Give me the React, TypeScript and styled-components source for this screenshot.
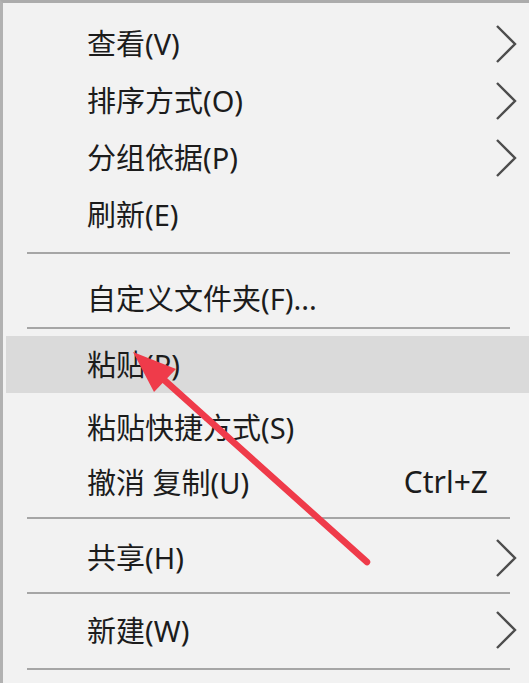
import React from 'react'
import styled, { createGlobalStyle } from 'styled-components'

const GlobalStyle = createGlobalStyle`
  html, body {
    margin: 0;
    padding: 0;
    background: #f2f2f2;
  }
  body {
    font-family: 'Noto Sans', 'Noto Sans CJK SC', sans-serif;
  }
`

type Entry =
  | { kind: 'item'; label: string; sub?: boolean; shortcut?: string; active?: boolean; h?: number }
  | { kind: 'sep'; mt: number; mb: number }

const entries: Entry[] = [
  { kind: 'item', label: '查看(V)', sub: true },
  { kind: 'item', label: '排序方式(O)', sub: true },
  { kind: 'item', label: '分组依据(P)', sub: true },
  { kind: 'item', label: '刷新(E)' },
  { kind: 'sep', mt: 9, mb: 16 },
  { kind: 'item', label: '自定义文件夹(F)...' },
  { kind: 'sep', mt: 0, mb: 7 },
  { kind: 'item', label: '粘贴(P)', active: true },
  { kind: 'item', label: '粘贴快捷方式(S)', h: 68 },
  { kind: 'item', label: '撤消 复制(U)', shortcut: 'Ctrl+Z', h: 42 },
  { kind: 'sep', mt: 14, mb: 10 },
  { kind: 'item', label: '共享(H)', sub: true },
  { kind: 'sep', mt: 6, mb: 8 },
  { kind: 'item', label: '新建(W)', sub: true, h: 56 },
  { kind: 'sep', mt: 10, mb: 13 },
]

const Stage = styled.div`
  position: relative;
  width: 529px;
  height: 683px;
  overflow: hidden;
`

const Menu = styled.div`
  box-sizing: border-box;
  height: 100%;
  padding: 12px 0 0 3px;
  border-top: 3px solid #acacac;
  border-left: 3px solid #b2b2b2;
  background: #f2f2f2;
`

const Row = styled.div<{ $active?: boolean; $h: number }>`
  display: flex;
  align-items: center;
  height: ${(p) => p.$h}px;
  padding-left: 81px;
  background: ${(p) => (p.$active ? '#dadada' : 'transparent')};
  color: #1c1c1c;
  font-size: 29px;
  line-height: 1;
  white-space: nowrap;
`

const Label = styled.span`
  flex: 1;
`

const Shortcut = styled.span`
  margin-right: 41px;
  font-size: 30px;
`

const Chevron = styled.svg`
  width: 24px;
  height: 40px;
  margin-right: 11px;
`

const Separator = styled.div<{ $mt: number; $mb: number }>`
  height: 2px;
  margin: ${(p) => p.$mt}px 19px ${(p) => p.$mb}px 21px;
  background: #a6a6a6;
`

const Overlay = styled.svg`
  position: absolute;
  top: 0;
  left: 0;
  pointer-events: none;
`

const SubArrow = () => (
  <Chevron viewBox="0 0 24 40">
    <path d="M3 2 L21 20 L3 38" fill="none" stroke="#4d4d4d" strokeWidth="2.4" />
  </Chevron>
)

export default function App() {
  return (
    <Stage>
      <GlobalStyle />
      <Menu>
        {entries.map((e, i) =>
          e.kind === 'sep' ? (
            <Separator key={i} $mt={e.mt} $mb={e.mb} />
          ) : (
            <Row key={i} $active={e.active} $h={e.h ?? 57}>
              <Label>{e.label}</Label>
              {e.shortcut && <Shortcut>{e.shortcut}</Shortcut>}
              {e.sub && <SubArrow />}
            </Row>
          )
        )}
      </Menu>
      <Overlay width="529" height="683" viewBox="0 0 529 683">
        <line x1="162" y1="378" x2="367" y2="562" stroke="#ef3b4a" strokeWidth="6.5" strokeLinecap="round" />
        <polygon points="133,352 154,392 176,369" fill="#ef3b4a" />
      </Overlay>
    </Stage>
  )
}
